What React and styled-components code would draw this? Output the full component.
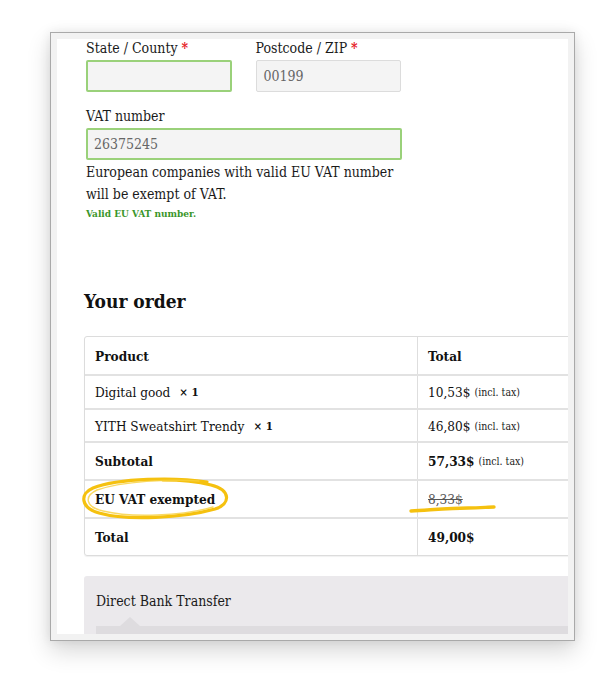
import React from 'react';
import styled, { createGlobalStyle } from 'styled-components';

const GlobalStyle = createGlobalStyle`
    body {
        margin: 0;
        background: #ffffff;
        font-family: "DejaVu Serif Condensed", "DejaVu Serif", serif;
        color: #1a1a1a;
    }
`;

const Page = styled.div`
    padding: 32px 0 0 50px;
    width: 600px;
    height: 675px;
    box-sizing: border-box;
`;
const Frame = styled.div`
    width: 525px;
    height: 609px;
    box-sizing: border-box;
    border: 1px solid #a9a9a9;
    padding: 6px;
    background: #f2f2f2;
    box-shadow: 0 10px 22px rgba(0,0,0,0.16), 0 0 10px rgba(0,0,0,0.08);
`;
const Screen = styled.div`
    background: #fff;
    height: 100%;
    overflow: hidden;
    padding-left: 27px;
    box-sizing: border-box;
`;
const Fields = styled.div`
    padding-left: 2px;
    width: 315px;
`;
const FieldRow = styled.div`
    display: flex;
    gap: 24px;
`;
const Field = styled.div`
    display: flex;
    flex-direction: column;
    width: ${props => props.wide ? '316px' : '146px'};
    margin-bottom: 15px;
`;
const Label = styled.label`
    font-size: 14px;
    line-height: 18px;
    color: #1a1a1a;
    margin-bottom: 3px;
    span {
        color: #e5201f;
        font-weight: bold;
    }
`;
const Input = styled.div`
    height: 32px;
    box-sizing: border-box;
    background: #f4f4f4;
    border: ${props => props.valid ? '2px solid #9ad17a' : '1px solid #dcdcdc'};
    border-radius: 2px;
    padding: 0 ${props => props.valid ? '6px' : '7px'};
    display: flex;
    align-items: center;
    font-size: 14px;
    color: #666;
`;
const Note = styled.p`
    margin: -14px 0 0;
    font-size: 14px;
    line-height: 22px;
    color: #1a1a1a;
    width: 320px;
`;
const Valid = styled.div`
    margin-top: 2px;
    font-size: 10px;
    line-height: 14px;
    font-weight: bold;
    color: #3a962a;
`;
const Heading = styled.h3`
    margin: 68px 0 23px;
    font-size: 19px;
    line-height: 24px;
    font-weight: bold;
    color: #111;
`;
const TableWrap = styled.div`
    position: relative;
    width: 540px;
`;
const Table = styled.div`
    border: 1px solid #dcdcdc;
    border-radius: 3px;
    box-shadow: 0 1px 1px rgba(0,0,0,0.06);
`;
const Row = styled.div`
    display: grid;
    grid-template-columns: 332px 1fr;
    height: ${props => props.h}px;
    border-top: ${props => props.first ? 'none' : '2px solid #e2e2e2'};
    box-sizing: border-box;
`;
const Cell = styled.div`
    display: flex;
    align-items: center;
    padding: 0 10px;
    font-size: 13.5px;
    color: #111;
    font-weight: ${props => props.bold ? 'bold' : 'normal'};
    border-left: ${props => props.right ? '1px solid #dedede' : 'none'};
`;
const Qty = styled.b`
    margin-left: 9px;
    font-size: 11.5px;
`;
const Tax = styled.small`
    margin-left: 4px;
    font-size: 10.5px;
    font-weight: normal;
    color: #222;
`;
const Struck = styled.del`
    color: #555;
`;
const Scribble = styled.svg`
    position: absolute;
    pointer-events: none;
    overflow: visible;
`;
const Payment = styled.div`
    margin-top: 20px;
    width: 540px;
    height: 70px;
    background: #ebe9ec;
    border-radius: 3px;
    padding: 16px 0 0 12px;
    box-sizing: border-box;
`;
const PaymentTitle = styled.div`
    font-size: 14px;
    line-height: 18px;
    color: #1a1a1a;
`;
const PaymentBox = styled.div`
    position: relative;
    margin-top: 16px;
    height: 30px;
    background: #dedcdf;
    &::before {
        content: '';
        position: absolute;
        left: 24px;
        top: -9px;
        border: 10px solid transparent;
        border-top: none;
        border-bottom: 9px solid #dedcdf;
    }
`;

const rows = [
    { h: 37, name: 'Product', total: 'Total', head: true },
    { h: 34, name: 'Digital good', qty: true, total: '10,53$', tax: true },
    { h: 33, name: 'YITH Sweatshirt Trendy', qty: true, total: '46,80$', tax: true },
    { h: 38, name: 'Subtotal', total: '57,33$', tax: true, bold: true },
    { h: 38, name: 'EU VAT exempted', total: '8,33$', struck: true, bold: true },
    { h: 38, name: 'Total', total: '49,00$', bold: true, boldTotal: true },
];

export default function App() {
    return (
        <Page>
            <GlobalStyle />
            <Frame>
                <Screen>
                    <Fields>
                        <FieldRow>
                            <Field>
                                <Label>State / County <span>*</span></Label>
                                <Input valid />
                            </Field>
                            <Field>
                                <Label>Postcode / ZIP <span>*</span></Label>
                                <Input>00199</Input>
                            </Field>
                        </FieldRow>
                        <Field wide>
                            <Label>VAT number</Label>
                            <Input valid>26375245</Input>
                        </Field>
                        <Note>European companies with valid EU VAT number will be exempt of VAT.</Note>
                        <Valid>Valid EU VAT number.</Valid>
                    </Fields>

                    <Heading>Your order</Heading>

                    <TableWrap>
                        <Table>
                            {rows.map((r, i) => (
                                <Row key={r.name} h={r.h} first={i === 0}>
                                    <Cell bold={r.head || r.bold}>
                                        {r.name}
                                        {r.qty && <Qty>× 1</Qty>}
                                    </Cell>
                                    <Cell right bold={r.head || r.tax && r.bold || r.boldTotal}>
                                        {r.struck ? <Struck>{r.total}</Struck> : r.total}
                                        {r.tax && <Tax>(incl. tax)</Tax>}
                                    </Cell>
                                </Row>
                            ))}
                        </Table>
                        <Scribble style={{ left: -5, top: 140 }} width="152" height="46" viewBox="0 0 152 46">
                            <path d="M128 6 C 96 1, 40 2, 14 12 C 0 18, 2 32, 20 37 C 48 45, 104 42, 136 33 C 152 28, 152 14, 132 9 C 116 5, 98 4, 84 4"
                                fill="none" stroke="#f5c10f" strokeWidth="3.2" strokeLinecap="round" />
                            <path d="M120 5 C 90 3, 44 5, 18 14 C 5 20, 6 31, 24 35 C 52 42, 104 40, 134 31"
                                fill="none" stroke="#f8cf3a" strokeWidth="1.4" strokeLinecap="round" opacity="0.8" />
                        </Scribble>
                        <Scribble style={{ left: 326, top: 169 }} width="86" height="8" viewBox="0 0 86 8">
                            <path d="M1 6 C 20 5, 40 3, 58 3 C 70 3, 78 2, 84 2"
                                fill="none" stroke="#f5c10f" strokeWidth="3.4" strokeLinecap="round" />
                        </Scribble>
                    </TableWrap>

                    <Payment>
                        <PaymentTitle>Direct Bank Transfer</PaymentTitle>
                        <PaymentBox />
                    </Payment>
                </Screen>
            </Frame>
        </Page>
    );
}
